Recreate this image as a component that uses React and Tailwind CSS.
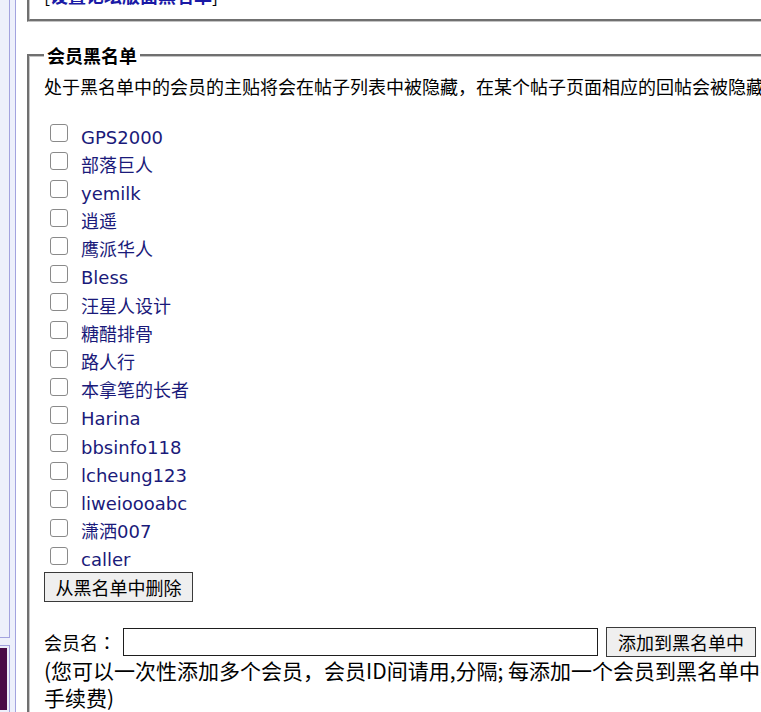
import React, { useState } from 'react'

const members = [
    "GPS2000", "部落巨人", "yemilk", "逍遥", "鹰派华人", "Bless", "汪星人设计", "糖醋排骨",
    "路人行", "本拿笔的长者", "Harina", "bbsinfo118", "lcheung123", "liweioooabc", "潇洒007", "caller"
]

const App = () => {
    const [checked, setChecked] = useState({})
    const [name, setName] = useState("")

    const toggle = (m) => setChecked({ ...checked, [m]: !checked[m] })

    return (
        <div className="flex h-[712px] w-[761px] overflow-hidden bg-white text-black font-['Noto_Sans_CJK_SC',sans-serif] text-[18px]">
            {/* left sidebar strip */}
            <div className="flex h-full w-[16px] shrink-0 flex-col bg-[#edf0fb] border-r border-[#a3a3df]">
                <div className="h-[638px] w-[10px] border-r border-b border-[#a3a3df]"></div>
                <div className="mt-[7px] flex-1 w-[10px] border-t border-r border-[#a3a3df] p-[2px] pl-0">
                    <div className="h-full w-full bg-[#4a0c48]"></div>
                </div>
            </div>

            <div className="flex-1 overflow-hidden pl-[11px]">
                <fieldset className="mt-[-27px] w-[1000px] border-[3px] [border-style:groove] border-[#c4c4c4] px-[14px] pt-[7px] pb-[12px]">
                    <div className="leading-[24px]">
                        [<a href="#" className="font-bold text-[#1a1aa6]">设置论坛版面黑名单</a>]
                    </div>
                </fieldset>

                <fieldset className="mt-[21px] w-[1000px] border-[3px] [border-style:groove] border-[#c4c4c4] px-[14px] pt-[7px] pb-[12px]">
                    <legend className="px-[3px] font-bold leading-[24px]">会员黑名单</legend>
                    <div className="leading-[24px] whitespace-nowrap">
                        处于黑名单中的会员的主贴将会在帖子列表中被隐藏，在某个帖子页面相应的回帖会被隐藏。
                    </div>
                    <div className="h-[23px]"></div>
                    {members.map((m) => (
                        <div key={m} className="flex h-[28.2px] items-start">
                            <input
                                type="checkbox"
                                checked={!!checked[m]}
                                onChange={() => toggle(m)}
                                className="ml-[6px] mt-[3px] h-[18px] w-[18px] shrink-0 appearance-none rounded-[3px] border border-[#8a8a8a] bg-white checked:bg-[#1a73e8]"
                            />
                            <a href="#" className="ml-[13px] pt-[2.5px] leading-[28px] text-[#1a1a7a] font-['DejaVu_Sans','Noto_Sans_CJK_SC',sans-serif]">
                                {m}
                            </a>
                        </div>
                    ))}
                    <button className="h-[30px] w-[149px] border border-[#3a3a3a] bg-[#efefef] text-[18px] leading-[28px]">
                        从黑名单中删除
                    </button>

                    <div className="mt-[25px] flex h-[30px] items-center">
                        <span className="leading-[24px]">会员名<span className="font-['Noto_Sans_CJK_JP',sans-serif]">：</span></span>
                        <input
                            value={name}
                            onChange={(e) => setName(e.target.value)}
                            className="ml-[7px] h-[28px] w-[475px] border border-[#1e1e1e] bg-white px-1 outline-none"
                        />
                        <button className="ml-[8px] h-[30px] w-[150px] border border-[#3a3a3a] bg-[#efefef] text-[18px] leading-[28px]">
                            添加到黑名单中
                        </button>
                    </div>
                    <div className="text-[21px] leading-[27px] whitespace-nowrap">
                        (您可以一次性添加多个会员，会员ID间请用,分隔; 每添加一个会员到黑名单中需扣除一定的<br />
                        手续费)
                    </div>
                </fieldset>
            </div>
        </div>
    )
}

export default App
